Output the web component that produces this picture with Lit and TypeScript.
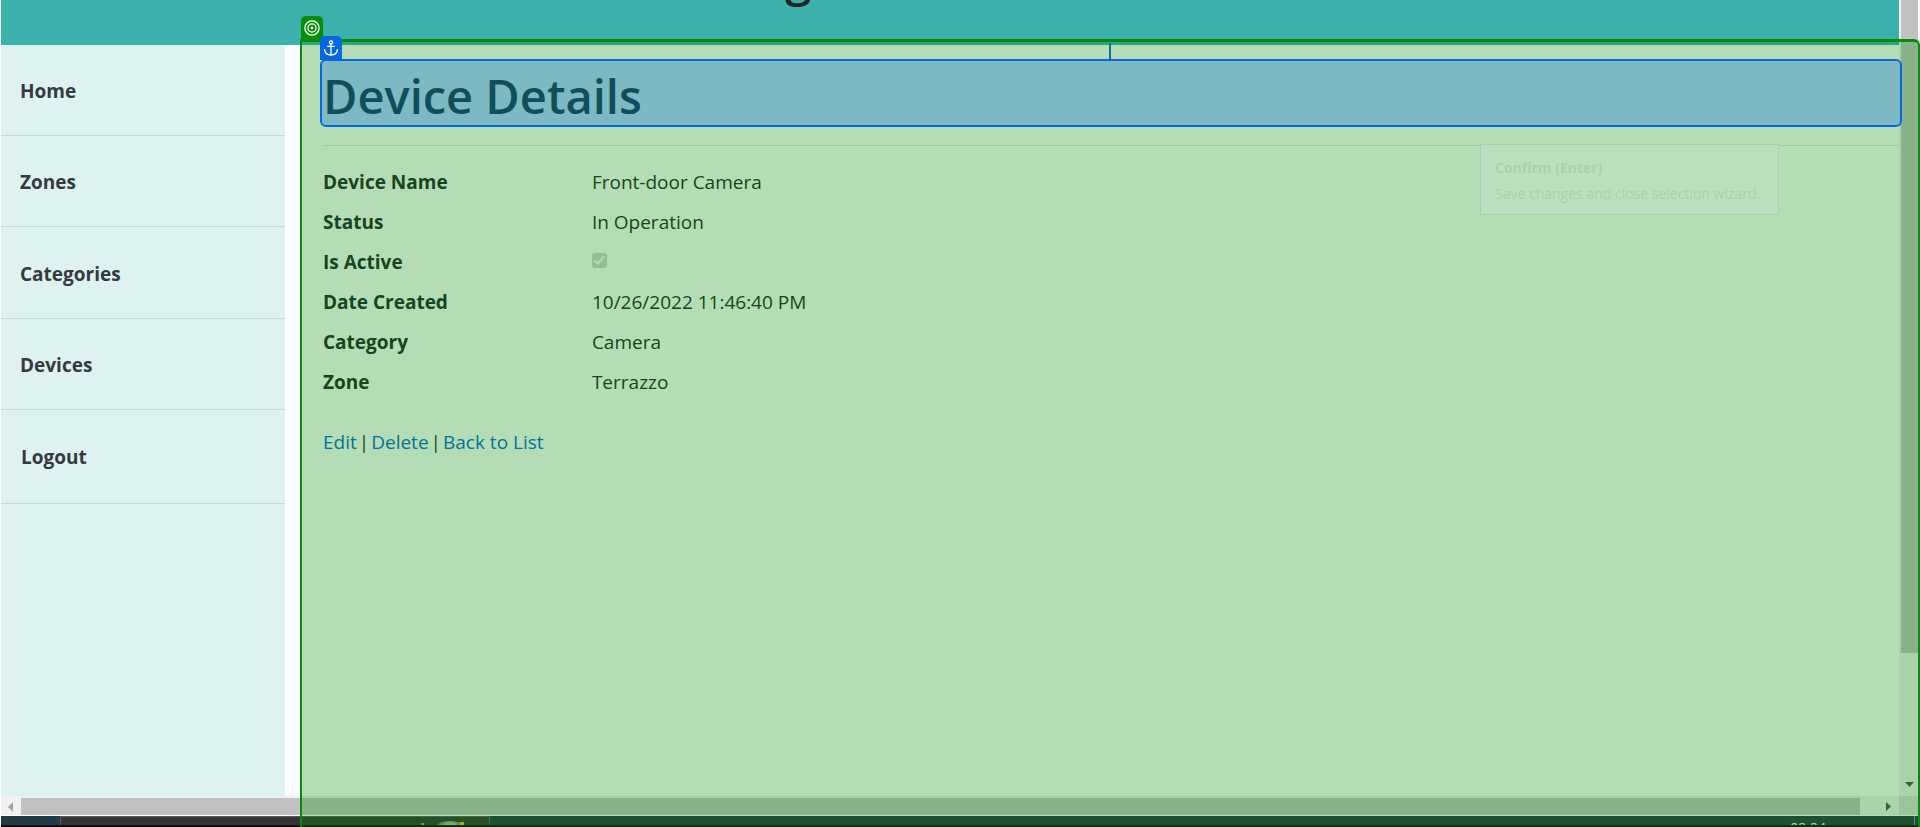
import { LitElement, html, css, svg, nothing } from "lit";
import { customElement } from "lit/decorators.js";

const LINKS = ["Home", "Zones", "Categories", "Devices"];

const DETAILS: Array<[string, string | boolean]> = [
  ["Device Name", "Front-door Camera"],
  ["Status", "In Operation"],
  ["Is Active", true],
  ["Date Created", "10/26/2022 11:46:40 PM"],
  ["Category", "Camera"],
  ["Zone", "Terrazzo"],
];

const targetIcon = svg`<svg class="icon" viewBox="0 0 16 16" width="16" height="16" aria-hidden="true">
  <g fill="none" stroke="#fff" stroke-width="1.3">
    <circle cx="8" cy="8" r="7.1"/><circle cx="8" cy="8" r="4.1"/>
  </g><circle cx="8" cy="8" r="1.4" fill="#fff"/></svg>`;

const anchorIcon = svg`<svg class="icon" viewBox="0 0 16 16" width="16" height="16" aria-hidden="true">
  <g fill="none" stroke="#fff" stroke-width="1.3" stroke-linecap="round">
    <circle cx="8" cy="2.4" r="1.6"/>
    <path d="M8 4v11M4.6 6.3h6.8M1.6 9.6c.3 3.2 2.7 5.4 6.4 5.4s6.1-2.2 6.4-5.4"/>
  </g></svg>`;

@customElement("app-root")
export class AppRoot extends LitElement {
  static styles = css`
    :host {
      display: flex;
      flex-direction: column;
      position: relative;
      height: 100vh;
      overflow: hidden;
      box-sizing: border-box;
      background: #fff;
      color: #212529;
      font: 19px/30px "Open Sans", "Noto Sans", sans-serif;
    }
    * { box-sizing: border-box; }
    .window {
      flex: 1;
      min-height: 0;
      display: grid;
      grid-template-columns: minmax(0, 1fr) 19px;
      grid-template-rows: minmax(0, 1fr) 19px;
      padding: 0 2px 1px 1px;
    }
    .page { display: flex; flex-direction: column; min-height: 0; }
    .banner {
      height: 45px;
      overflow: hidden;
      background: #3cb0ab;
      text-align: center;
      padding-right: 16%;
    }
    .brand {
      margin: -52px 0 0;
      font-size: 47px;
      line-height: 60px;
      font-weight: 600;
    }
    .body { flex: 1; display: flex; min-height: 0; }
    .side { width: 284px; background: #def2f1; }
    .side ul { list-style: none; margin: 0; padding: 0; }
    .side li { border-bottom: 1px solid #c5d9d9; }
    .side a, .side button {
      display: block;
      width: 100%;
      padding: 31px 19px 29px;
      border: 0;
      background: none;
      text-align: left;
      text-decoration: none;
      color: #343a40;
      font: inherit;
      font-weight: 700;
    }
    .side li:nth-child(3) a { padding-top: 32px; }
    .side button { padding: 32px 20px 31px; }
    main { flex: 1; min-width: 0; padding: 14px 0 0 38px; }
    .heading {
      position: relative;
      margin: 0 0 18px;
      padding-top: 6px;
      font-size: 47px;
      line-height: 62px;
      font-weight: 600;
      color: #212529;
    }
    .rule { height: 1px; margin: 0 0 21px; border: 0; background: #e4e4e4; }
    dl {
      display: grid;
      grid-template-columns: calc(17% + 1px) minmax(0, 1fr);
      row-gap: 10px;
      margin: 0;
    }
    dt { font-weight: 700; }
    dd { margin: 0; }
    .tick {
      appearance: none;
      display: block;
      position: relative;
      width: 15px;
      height: 15px;
      margin: 6px 0 0;
      border-radius: 3px;
      background: #d2d2d2;
    }
    .tick::after {
      content: "";
      position: absolute;
      inset: 2px;
      background: #fafafa;
      clip-path: polygon(0 55%, 14% 40%, 36% 62%, 84% 5%, 100% 20%, 38% 94%);
    }
    .actions { display: flex; gap: 2px; margin: 30px 0 0; }
    .actions a { color: #0366d6; text-decoration: none; }

    .vbar { background: #f1f1f1; padding-left: 2px; display: flex; flex-direction: column; justify-content: space-between; align-items: center; }
    .vbar .thumb { align-self: stretch; height: 82%; background: #c1c1c1; }
    .hbar { background: #f1f1f1; padding-top: 2px; display: flex; align-items: center; }
    .hbar .thumb { flex: 1; align-self: stretch; background: #c1c1c1; }
    .left, .right { display: flex; align-items: center; }
    .left { width: 20px; padding-left: 7px; }
    .right { width: 39px; padding-left: 26px; }
    .down { padding-bottom: 9px; }
    .bar-icon { display: block; }
    .corner { background: #dcdcdc; }
    .taskbar {
      height: 11px;
      display: flex;
      overflow: hidden;
      border-bottom: 2px solid #0c0d12;
      margin-left: 1px;
      background: #223743;
    }
    .start { width: 59px; background: #233b46; }
    .tasks {
      width: 430px;
      background: #343434;
      border: solid #5b5b5b;
      border-width: 1px 1px 0;
    }
    .art { display: block; margin-left: 358px; }
    .clock {
      margin-left: auto;
      padding: 5px 88px 0 0;
      color: #fff;
      font-size: 14px;
      line-height: 14px;
    }
    .edge { width: 1px; margin-right: 5px; background: #8b9aa4; }

    .region {
      position: absolute;
      z-index: 1;
      inset: 39px 0 -8px 300px;
      border: 3px solid #088a10;
      border-radius: 0 6px 0 0;
      border-right-width: 2px;
      border-left-width: 2px;
      background: rgba(8, 141, 14, 0.3);
      background-clip: padding-box;
      pointer-events: none;
    }
    .badge {
      position: absolute;
      width: 22px;
      height: 24px;
      display: grid;
      place-items: center;
      border-radius: 5px 5px 0 0;
    }
    .icon { display: block; }
    .badge.green { left: -1px; top: -26px; background: #078c0c; }
    .picked {
      position: absolute;
      z-index: 2;
      inset: 0 -3px 0 -3px;
      border: 2px solid #0668e0;
      border-radius: 6px;
      background: rgba(0, 102, 224, 0.3);
      background-clip: padding-box;
      pointer-events: none;
    }
    .badge.blue { left: -2px; top: -25px; background: #0668e0; }
    .link-line {
      position: absolute;
      right: 50%;
      bottom: 100%;
      width: 2px;
      height: 18px;
      background: #0474a0;
    }
    .hint {
      position: absolute;
      z-index: 3;
      top: 144px;
      right: 141px;
      width: 299px;
      padding: 12px 14px 5px;
      border: 1px solid #a9ceac;
      background: #bbdfbe;
      color: #a9cfac;
      font-size: 14px;
    }
    .hint strong { display: block; font-weight: 700; line-height: 22px; }
    .hint p { margin: 0; line-height: 30px; }
  `;

  private arrow(points: string, w: number, h: number, fill: string) {
    return html`<svg class="bar-icon" width=${w} height=${h} viewBox="0 0 ${w} ${h}" aria-hidden="true">
      <polygon points=${points} fill=${fill}></polygon>
    </svg>`;
  }

  render() {
    return html`
      <div class="window">
        <div class="page">
          <header class="banner"><div class="brand">g</div></header>
          <div class="body">
            <nav class="side">
              <ul>
                ${LINKS.map((t) => html`<li><a href="#">${t}</a></li>`)}
                <li><button type="button">Logout</button></li>
              </ul>
            </nav>
            <main>
              <h1 class="heading">Device Details<span class="picked"
                  ><span class="link-line"></span><span class="badge blue">${anchorIcon}</span></span></h1>
              <hr class="rule" />
              <dl>
                ${DETAILS.map(([k, v]) => html`
                  <dt>${v === true ? html`<label for="active">${k}</label>` : k}</dt>
                  <dd>${v === true
                    ? html`<input id="active" class="tick" type="checkbox" checked disabled />`
                    : v || nothing}</dd>`)}
              </dl>
              <p class="actions"><a href="#">Edit</a> | <a href="#">Delete</a> | <a href="#">Back to List</a></p>
            </main>
          </div>
        </div>
        <div class="vbar">
          <div class="thumb"></div>
          <div class="down">${this.arrow("0,0 9,0 4.5,5", 9, 5, "#505050")}</div>
        </div>
        <div class="hbar">
          <div class="left">${this.arrow("5,0 5,10 0,5", 5, 10, "#a3a3a3")}</div>
          <div class="thumb"></div>
          <div class="right">${this.arrow("0,0 5,4.5 0,9", 5, 9, "#505050")}</div>
        </div>
        <div class="corner"></div>
      </div>
      <footer class="taskbar">
        <div class="start"></div>
        <div class="tasks">
          <svg class="art" width="50" height="9" viewBox="0 0 50 9" aria-hidden="true">
            <ellipse cx="31" cy="9" rx="13" ry="5" fill="#8b8d72"></ellipse>
            <ellipse cx="31" cy="8" rx="7" ry="3" fill="#b3b295"></ellipse>
            <rect x="2" y="6" width="3" height="3" fill="#b883b8"></rect>
            <rect x="41" y="5" width="4" height="4" fill="#f0c000"></rect>
          </svg>
        </div>
        <div class="clock">02:24</div>
        <div class="edge"></div>
      </footer>
      <div class="region"><span class="badge green">${targetIcon}</span></div>
      <div class="hint" role="tooltip">
        <strong>Confirm (Enter)</strong>
        <p>Save changes and close selection wizard.</p>
      </div>
    `;
  }
}
